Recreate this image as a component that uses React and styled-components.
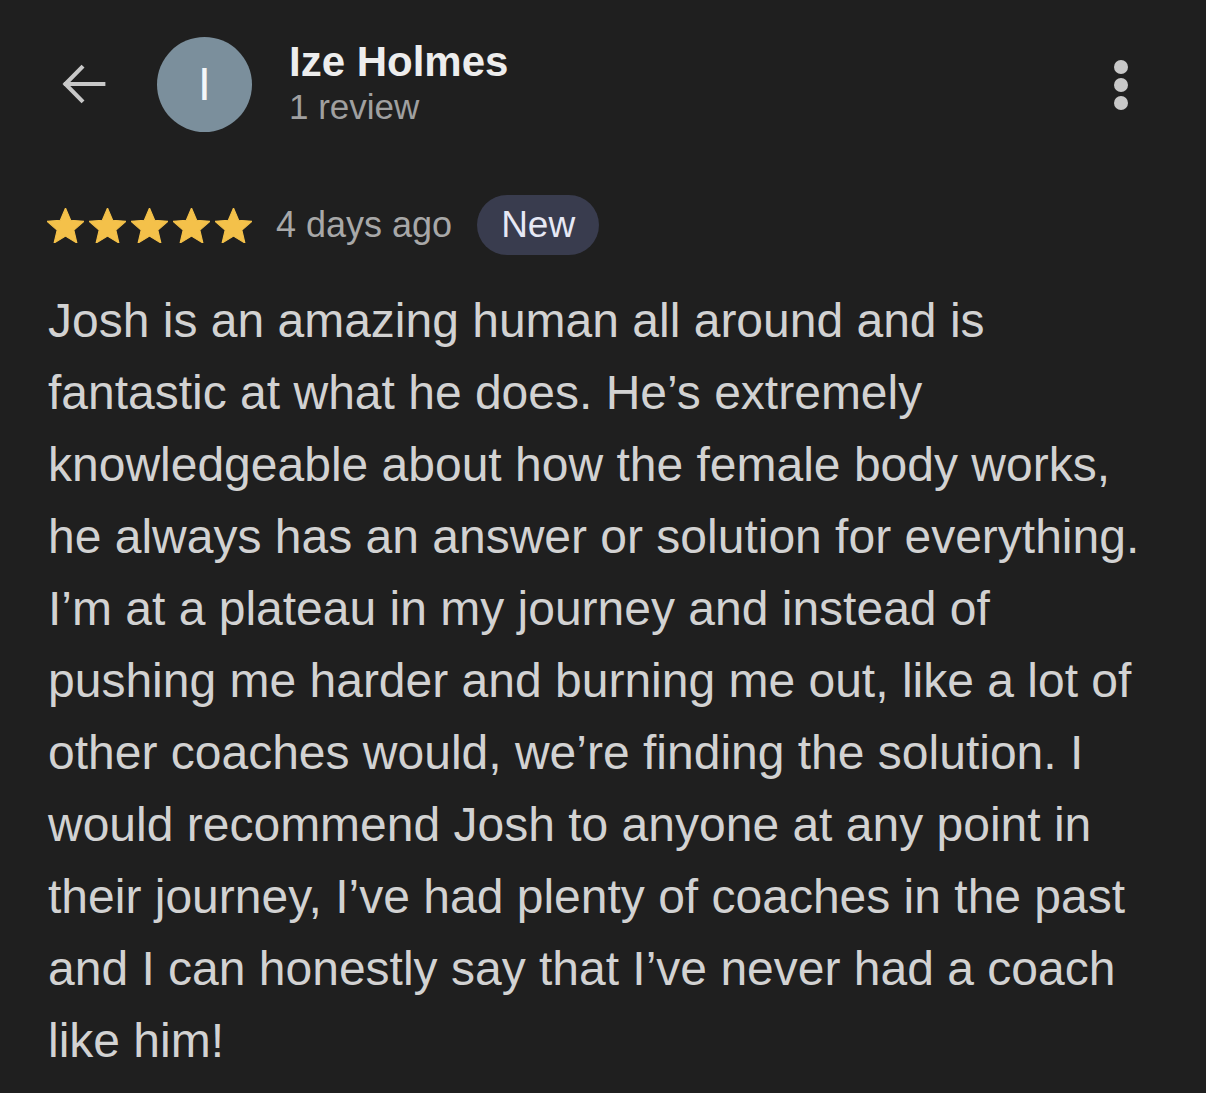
import React from "react";
import styled, { createGlobalStyle } from "styled-components";

const Global = createGlobalStyle`
  html, body { margin: 0; padding: 0; background: #1f1f1f; }
  body { font-family: "Liberation Sans", Arial, sans-serif; }
`;

const Page = styled.div`
  width: 1206px;
  height: 1093px;
  background: #1f1f1f;
  box-sizing: border-box;
  padding: 36px 48px 0 48px;
  overflow: hidden;
`;

const Header = styled.div`
  display: flex;
  align-items: center;
  height: 96px;
`;

const BackButton = styled.div`
  width: 64px;
  height: 64px;
  margin-left: 4px;
  display: flex;
  align-items: center;
  justify-content: center;
`;

const Avatar = styled.div`
  width: 95px;
  height: 95px;
  border-radius: 50%;
  background: #7b8f9c;
  color: #f4f6f8;
  display: flex;
  align-items: center;
  justify-content: center;
  font-size: 46px;
  margin-left: 41px;
`;

const NameBlock = styled.div`
  display: flex;
  flex-direction: column;
  margin-left: 37px;
  flex: 1;
`;

const Name = styled.div`
  color: #ededed;
  font-weight: bold;
  font-size: 42px;
  line-height: 48px;
  margin-top: -2px;
`;

const Sub = styled.div`
  color: #a0a0a0;
  font-size: 35px;
  line-height: 42px;
`;

const MoreButton = styled.div`
  display: flex;
  flex-direction: column;
  gap: 4px;
  margin-right: 30px;
  margin-top: 2px;
`;

const Dot = styled.span`
  width: 14px;
  height: 14px;
  border-radius: 50%;
  background: #c8c8c8;
`;

const MetaRow = styled.div`
  display: flex;
  align-items: center;
  margin-top: 63px;
  height: 60px;
`;

const Stars = styled.div`
  display: flex;
  gap: 5px;
  margin-left: -1px;
`;

const When = styled.span`
  color: #a8a8a8;
  font-size: 36px;
  margin-left: 24px;
`;

const Pill = styled.span`
  margin-left: 25px;
  height: 60px;
  padding: 0 24px;
  border-radius: 30px;
  background: #393c4e;
  color: #e6e8f5;
  font-size: 37px;
  display: flex;
  align-items: center;
`;

const Body = styled.p`
  margin: 30px 0 0 0;
  color: #d2d2d2;
  font-size: 48px;
  line-height: 72px;
  white-space: nowrap;
`;

const Star = () => (
  <svg width="37" height="35" viewBox="2 2 20 19">
    <path
      fill="#f4c14a"
      stroke="#f4c14a"
      strokeWidth="0.6"
      strokeLinejoin="round"
      d="M12 17.27L18.18 21l-1.64-7.03L22 9.24l-7.19-.61L12 2 9.19 8.63 2 9.24l5.46 4.73L5.82 21z"
    />
  </svg>
);

const lines = [
  "Josh is an amazing human all around and is",
  "fantastic at what he does. He\u2019s extremely",
  "knowledgeable about how the female body works,",
  "he always has an answer or solution for everything.",
  "I\u2019m at a plateau in my journey and instead of",
  "pushing me harder and burning me out, like a lot of",
  "other coaches would, we\u2019re finding the solution. I",
  "would recommend Josh to anyone at any point in",
  "their journey, I\u2019ve had plenty of coaches in the past",
  "and I can honestly say that I\u2019ve never had a coach",
  "like him!",
];

export default function App() {
  return (
    <>
      <Global />
      <Page>
        <Header>
          <BackButton>
            <svg width="58" height="58" viewBox="0 0 24 24" fill="none" stroke="#c8c8c8" strokeWidth="1.7" strokeLinecap="square">
              <path d="M20 12H4.5M11 5.2L4.3 12l6.7 6.8" />
            </svg>
          </BackButton>
          <Avatar>I</Avatar>
          <NameBlock>
            <Name>Ize Holmes</Name>
            <Sub>1 review</Sub>
          </NameBlock>
          <MoreButton>
            <Dot />
            <Dot />
            <Dot />
          </MoreButton>
        </Header>
        <MetaRow>
          <Stars>
            <Star />
            <Star />
            <Star />
            <Star />
            <Star />
          </Stars>
          <When>4 days ago</When>
          <Pill>New</Pill>
        </MetaRow>
        <Body>
          {lines.map((l, i) => (
            <React.Fragment key={i}>
              {l}
              {i < lines.length - 1 && <br />}
            </React.Fragment>
          ))}
        </Body>
      </Page>
    </>
  );
}
